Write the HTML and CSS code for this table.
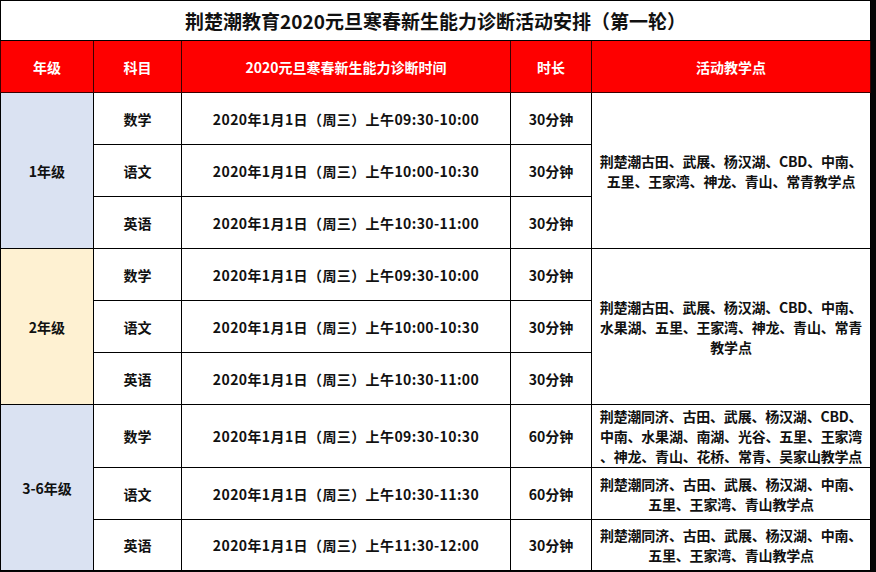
FILE: index.html
```html
<!DOCTYPE html>
<html lang="zh-CN">
<head>
<meta charset="utf-8">
<title>荆楚潮教育2020元旦寒春新生能力诊断活动安排（第一轮）</title>
<link rel="stylesheet" href="styles.css">
</head>
<body>
<table class="sched">
  <colgroup>
    <col class="c-grade">
    <col class="c-subj">
    <col class="c-time">
    <col class="c-dur">
    <col class="c-site">
  </colgroup>
  <tr class="r-title"><td colspan="5" class="title">荆楚潮教育2020元旦寒春新生能力诊断活动安排（第一轮）</td></tr>
  <tr class="r-head">
    <th>年级</th><th>科目</th><th>2020元旦寒春新生能力诊断时间</th><th>时长</th><th>活动教学点</th>
  </tr>
  <tr class="r-std">
    <td rowspan="3" class="grade blue">1年级</td>
    <td>数学</td><td class="time">2020年1月1日（周三）上午09:30-10:00</td><td>30分钟</td>
    <td rowspan="3" class="site">荆楚潮古田、武展、杨汉湖、CBD、中南、<br>五里、王家湾、神龙、青山、常青教学点</td>
  </tr>
  <tr class="r-std"><td>语文</td><td class="time">2020年1月1日（周三）上午10:00-10:30</td><td>30分钟</td></tr>
  <tr class="r-std"><td>英语</td><td class="time">2020年1月1日（周三）上午10:30-11:00</td><td>30分钟</td></tr>
  <tr class="r-std">
    <td rowspan="3" class="grade cream">2年级</td>
    <td>数学</td><td class="time">2020年1月1日（周三）上午09:30-10:00</td><td>30分钟</td>
    <td rowspan="3" class="site">荆楚潮古田、武展、杨汉湖、CBD、中南、<br>水果湖、五里、王家湾、神龙、青山、常青<br>教学点</td>
  </tr>
  <tr class="r-std"><td>语文</td><td class="time">2020年1月1日（周三）上午10:00-10:30</td><td>30分钟</td></tr>
  <tr class="r-std"><td>英语</td><td class="time">2020年1月1日（周三）上午10:30-11:00</td><td>30分钟</td></tr>
  <tr class="r-tall">
    <td rowspan="3" class="grade blue">3-6年级</td>
    <td>数学</td><td class="time">2020年1月1日（周三）上午09:30-10:30</td><td>60分钟</td>
    <td class="site">荆楚潮同济、古田、武展、杨汉湖、CBD、<br>中南、水果湖、南湖、光谷、五里、王家湾<br>、神龙、青山、花桥、常青、吴家山教学点</td>
  </tr>
  <tr class="r-std">
    <td>语文</td><td class="time">2020年1月1日（周三）上午10:30-11:30</td><td>60分钟</td>
    <td class="site">荆楚潮同济、古田、武展、杨汉湖、中南、<br>五里、王家湾、青山教学点</td>
  </tr>
  <tr class="r-last">
    <td>英语</td><td class="time">2020年1月1日（周三）上午11:30-12:00</td><td>30分钟</td>
    <td class="site">荆楚潮同济、古田、武展、杨汉湖、中南、<br>五里、王家湾、青山教学点</td>
  </tr>
</table>
</body>
</html>
```

FILE: styles.css
```css
html, body {
  margin: 0;
  padding: 0;
  background: #050505;
}

body {
  width: 876px;
  height: 572px;
  overflow: hidden;
  font-family: "Noto Sans CJK SC", "Noto Sans", sans-serif;
  color: #111;
}

.sched {
  border-collapse: collapse;
  table-layout: fixed;
  width: 870px;
  background: #fff;
}

.c-grade { width: 93px; }
.c-subj { width: 88px; }
.c-time { width: 329px; }
.c-dur { width: 81px; }
.c-site { width: 279px; }

.sched td,
.sched th {
  border: 1px solid #000;
  padding: 0;
  text-align: center;
  vertical-align: middle;
  font-size: 14px;
  font-weight: 700;
  line-height: 20px;
  white-space: nowrap;
  overflow: hidden;
}

.r-title { height: 40px; }
.r-head { height: 52px; }
.r-std { height: 52px; }
.r-tall { height: 63px; }
.r-last { height: 51px; }

.sched .title {
  font-size: 19px;
  line-height: 24px;
  color: #111;
}

.sched .r-head th {
  background: #fe0000;
  color: #fff;
  font-weight: 700;
  border-color: #3a0000;
}

.sched .time {
  letter-spacing: 0.4px;
}

.grade.blue { background: #dae2f2; }
.grade.cream { background: #fef1d2; }

.sched .site {
  line-height: 20px;
  letter-spacing: -0.2px;
}
```
